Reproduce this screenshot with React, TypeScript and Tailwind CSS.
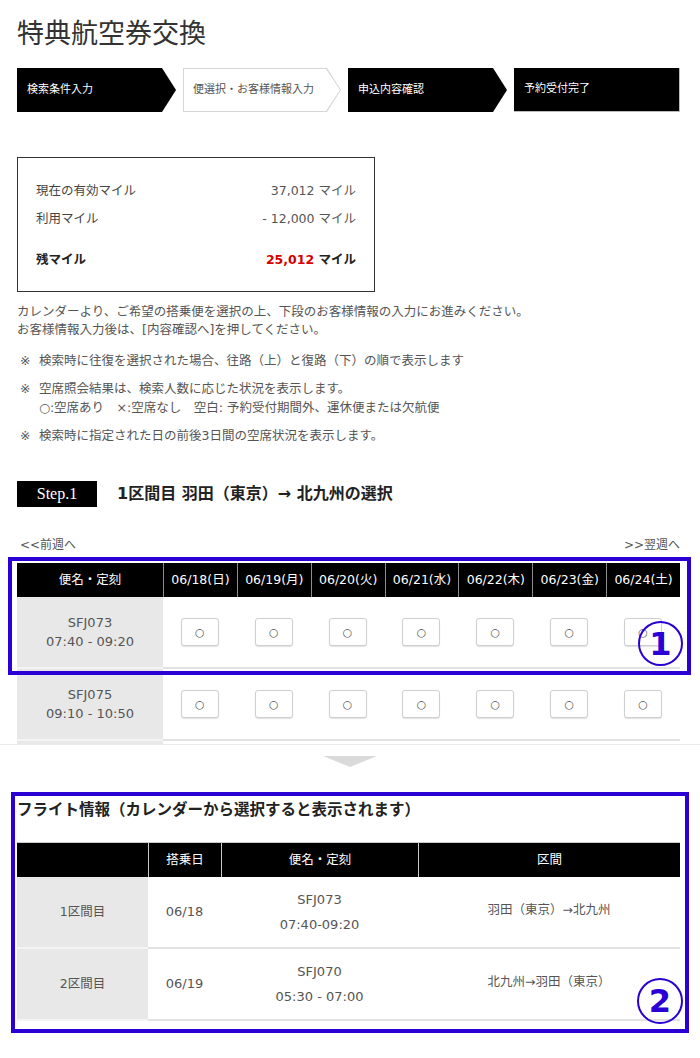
import React from "react";

const font = "font-['DejaVu_Sans','Noto_Sans_CJK_JP',sans-serif]";
const arrow =
  "[clip-path:polygon(0_0,calc(100%_-_14px)_0,100%_50%,calc(100%_-_14px)_100%,0_100%)]";

const dates = [
  "06/18(日)",
  "06/19(月)",
  "06/20(火)",
  "06/21(水)",
  "06/22(木)",
  "06/23(金)",
  "06/24(土)",
];

const flights = [
  { no: "SFJ073", time: "07:40 - 09:20" },
  { no: "SFJ075", time: "09:10 - 10:50" },
];

function SeatButton() {
  return (
    <button className="w-[38px] h-[28px] border border-[#cfcfcf] rounded-[3px] bg-white shadow-[0_1px_1px_rgba(0,0,0,0.12)] text-[11px] leading-none text-[#555] flex items-center justify-center">
      ○
    </button>
  );
}

export default function App() {
  return (
    <div className={`relative w-[700px] h-[1058px] bg-white text-[#555] ${font}`}>
      {/* Title */}
      <div className="pl-[17px] pr-[20px] pt-[16px]">
        <h1 className="text-[27px] leading-[36px] text-[#333] font-normal">特典航空券交換</h1>

        {/* Step bar */}
        <div className="flex gap-[7px] h-[44px] mt-[16px] text-[11px]">
          <div className={`w-[159px] bg-black text-white flex items-center pl-[10px] ${arrow}`}>
            検索条件入力
          </div>
          <div className={`relative w-[158px] bg-[#d6d6d6] ${arrow}`}>
            <div className={`absolute inset-[1px] bg-white text-[#555] flex items-center pl-[9px] ${arrow}`}>
              便選択・お客様情報入力
            </div>
          </div>
          <div className={`w-[159px] bg-black text-white flex items-center pl-[10px] ${arrow}`}>
            申込内容確認
          </div>
          <div className="w-[166px] bg-black text-white flex items-center pl-[10px] border-r border-b border-[#bbb]">
            予約受付完了
          </div>
        </div>

        {/* Miles box */}
        <div className="mt-[45px] w-[358px] border border-[#333] px-[18px] pt-[19px] pb-[17px] text-[12.5px]">
          <div className="flex justify-between leading-[28px]">
            <span className="text-[#444]">現在の有効マイル</span>
            <span>37,012 マイル</span>
          </div>
          <div className="flex justify-between leading-[28px]">
            <span className="text-[#444]">利用マイル</span>
            <span>- 12,000 マイル</span>
          </div>
          <div className="flex justify-between leading-[28px] mt-[13px] font-bold text-[#222]">
            <span>残マイル</span>
            <span>
              <span className="text-[#d40000]">25,012</span> マイル
            </span>
          </div>
        </div>

        {/* Description */}
        <p className="mt-[11px] text-[12.5px] leading-[18px]">
          カレンダーより、ご希望の搭乗便を選択の上、下段のお客様情報の入力にお進みください。
          <br />
          お客様情報入力後は、[内容確認へ]を押してください。
        </p>

        <div className="mt-[12px] text-[12.5px] leading-[19px] flex flex-col gap-[9px]">
          <div className="flex pl-[3px]">
            <span className="w-[19px] shrink-0">※</span>
            <span>検索時に往復を選択された場合、往路（上）と復路（下）の順で表示します</span>
          </div>
          <div className="flex pl-[3px]">
            <span className="w-[19px] shrink-0">※</span>
            <span>
              空席照会結果は、検索人数に応じた状況を表示します。
              <br />
              ○:空席あり　×:空席なし　空白: 予約受付期間外、運休便または欠航便
            </span>
          </div>
          <div className="flex pl-[3px]">
            <span className="w-[19px] shrink-0">※</span>
            <span>検索時に指定された日の前後3日間の空席状況を表示します。</span>
          </div>
        </div>

        {/* Step heading */}
        <div className="mt-[36px] flex items-center h-[26px]">
          <div className="w-[80px] h-[26px] bg-black text-white flex items-center justify-center font-['Liberation_Serif',serif] text-[16px]">
            Step.1
          </div>
          <h2 className="ml-[20px] text-[16px] font-bold text-[#222]">
            1区間目 羽田（東京）→ 北九州の選択
          </h2>
        </div>

        {/* Prev / Next */}
        <div className="mt-[30px] flex justify-between text-[12px] leading-[16px] pl-[3px]">
          <span>&lt;&lt;前週へ</span>
          <span>&gt;&gt;翌週へ</span>
        </div>
      </div>

      {/* Calendar table (clipped) */}
      <div className="mt-[10px] border-b border-[#ebebeb]">
        <div className="ml-[17px] mr-[20px] h-[181px] overflow-hidden">
          <div className="grid grid-cols-[146px_repeat(7,1fr)] h-[34px] bg-black text-white text-[12.5px]">
            <div className="flex items-center justify-center">便名・定刻</div>
            {dates.map((d) => (
              <div key={d} className="flex items-center justify-center border-l border-[#8c8c8c]">
                {d}
              </div>
            ))}
          </div>
          {flights.map((f) => (
            <div key={f.no} className="grid grid-cols-[146px_repeat(7,1fr)] h-[72px]">
              <div className="bg-[#e8e8e8] border-b-2 border-[#f4f4f4] flex flex-col items-center justify-center text-[13px] leading-[19px] text-[#555]">
                <span>{f.no}</span>
                <span>{f.time}</span>
              </div>
              {dates.map((d) => (
                <div key={d} className="border-b-2 border-[#e2e2e2] flex items-center justify-center">
                  <SeatButton />
                </div>
              ))}
            </div>
          ))}
          <div className="grid grid-cols-[146px_repeat(7,1fr)] h-[72px]">
            <div className="bg-[#e8e8e8]" />
          </div>
        </div>
      </div>

      {/* Down triangle */}
      <div className="mt-[11px] flex justify-center">
        <div className="w-0 h-0 border-l-[27px] border-r-[27px] border-t-[11px] border-l-transparent border-r-transparent border-t-[#dadada]" />
      </div>

      {/* Flight info */}
      <div className="pl-[17px] pr-[20px]">
        <h3 className="mt-[32px] text-[15.5px] leading-[22px] font-bold text-[#222]">
          フライト情報（カレンダーから選択すると表示されます）
        </h3>
        <div className="mt-[21px]">
          <div className="grid grid-cols-[131px_73px_197px_1fr] h-[35px] bg-black text-white text-[12.5px] border-t border-[#ccc]">
            <div />
            <div className="flex items-center justify-center border-l border-[#c8c8c8]">搭乗日</div>
            <div className="flex items-center justify-center border-l border-[#c8c8c8]">便名・定刻</div>
            <div className="flex items-center justify-center border-l border-[#c8c8c8]">区間</div>
          </div>
          {[
            { seg: "1区間目", date: "06/18", no: "SFJ073", time: "07:40-09:20", route: "羽田（東京）→北九州" },
            { seg: "2区間目", date: "06/19", no: "SFJ070", time: "05:30 - 07:00", route: "北九州→羽田（東京）" },
          ].map((r) => (
            <div key={r.seg} className="grid grid-cols-[131px_73px_197px_1fr] h-[72px] text-[12.5px]">
              <div className="bg-[#e8e8e8] border-b-2 border-[#f4f4f4] flex items-center justify-center">
                {r.seg}
              </div>
              <div className="border-b-2 border-[#e2e2e2] flex items-center justify-center text-[13px]">
                {r.date}
              </div>
              <div className="border-b-2 border-[#e2e2e2] flex flex-col items-center justify-center text-[13px] leading-[25px]">
                <span>{r.no}</span>
                <span>{r.time}</span>
              </div>
              <div className="border-b-2 border-[#e2e2e2] flex items-center justify-center pb-[4px]">
                {r.route}
              </div>
            </div>
          ))}
        </div>
      </div>

      {/* Annotations */}
      <div className="absolute left-[8px] top-[557px] w-[683px] h-[118px] border-4 border-[#2a00d5] pointer-events-none" />
      <div className="absolute left-[638px] top-[621px] w-[45px] h-[45px] rounded-full border-2 border-[#2a00d5] flex items-center justify-center text-[#2a00d5] font-bold text-[32px] leading-none pointer-events-none">
        1
      </div>
      <div className="absolute left-[11px] top-[792px] w-[678px] h-[241px] border-4 border-[#2a00d5] pointer-events-none" />
      <div className="absolute left-[637px] top-[978px] w-[46px] h-[46px] rounded-full border-2 border-[#2a00d5] flex items-center justify-center text-[#2a00d5] font-bold text-[32px] leading-none pointer-events-none">
        2
      </div>
    </div>
  );
}
